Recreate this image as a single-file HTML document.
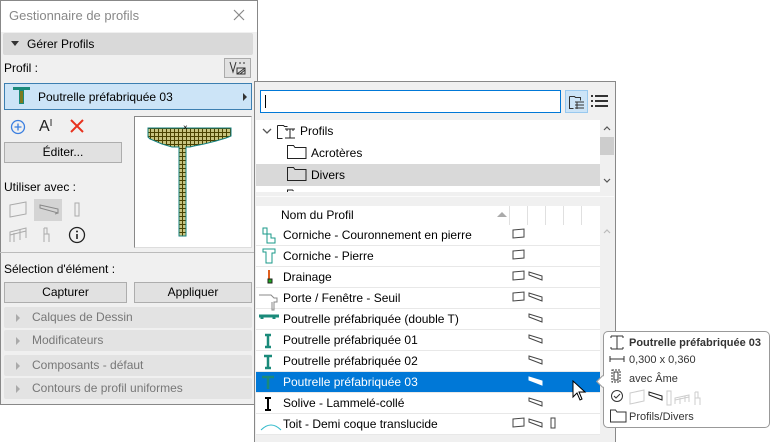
<!DOCTYPE html>
<html><head><meta charset="utf-8"><style>
*{box-sizing:border-box;margin:0;padding:0}
body{width:772px;height:442px;background:#fff;font-family:"Liberation Sans","DejaVu Sans",sans-serif;font-size:12px;color:#000;position:relative;overflow:hidden}
.a{position:absolute}
.btn{position:absolute;background:#e1e1e1;border:1px solid #adadad;text-align:center;line-height:18px;font-size:12px}
.bar{position:absolute;left:4px;width:248px;height:21px;background:#e3e3e3;border-radius:2px;color:#777;line-height:21px;padding-left:28px}
.bar:before{content:"";position:absolute;left:12px;top:7px;border-left:4px solid #aaa;border-top:4px solid transparent;border-bottom:4px solid transparent}
.row{position:absolute;left:256px;width:344px;height:21px;border-bottom:1px solid #e8e8e8;line-height:20px;padding-left:27px;font-size:12px;background:#fff}
.row.sel{background:#0078d7;color:#fff}
</style></head><body>
<!-- left panel -->
<div class="a" style="left:0;top:0;width:258px;height:405px;border:1px solid #888;background:#f0f0f0"></div>
<div class="a" style="left:1px;top:1px;width:256px;height:31px;background:#fff"></div>
<div class="a" style="left:9px;top:8px;color:#888;font-size:13px">Gestionnaire de profils</div>
<svg class="a" style="left:233px;top:9px" width="12" height="12"><path d="M1 1L11 11M11 1L1 11" stroke="#888" stroke-width="1.2"/></svg>
<div class="a" style="left:3px;top:33px;width:250px;height:22px;background:#d9d9d9;border-radius:2px"></div>
<div class="a" style="left:11px;top:41px;border-top:5px solid #333;border-left:4px solid transparent;border-right:4px solid transparent"></div>
<div class="a" style="left:27px;top:37px">Gérer Profils</div>
<div class="a" style="left:4px;top:61px">Profil :</div>
<div class="a" style="left:224px;top:58px;width:27px;height:20px;background:#e1e1e1;border:1px solid #aaa"></div>
<svg class="a" style="left:228px;top:60px" width="20" height="16" fill="none" stroke="#333"><path d="M2 2l3 10 3-10"/><path d="M9 8h8v6H9z"/><path d="M9 14l8-6M12 14l5-4" /><path d="M11 3h2M15 3h2"/></svg>
<div class="a" style="left:4px;top:83px;width:248px;height:27px;background:#cce4f7;border:1px solid #3c7fb1"></div>
<svg class="a" style="left:12px;top:86px" width="20" height="20"><rect x="1" y="1" width="17" height="3" fill="#1a8a7a"/><rect x="7" y="4" width="5" height="14" fill="#1a8a7a"/><rect x="8" y="5" width="3" height="12" fill="#7c7a20"/></svg>
<div class="a" style="left:38px;top:90px;font-size:12px">Poutrelle préfabriquée 03</div>
<div class="a" style="left:243px;top:93px;border-left:4px solid #333;border-top:4px solid transparent;border-bottom:4px solid transparent"></div>
<svg class="a" style="left:10px;top:119px" width="16" height="16"><circle cx="8" cy="8" r="6.5" fill="none" stroke="#3b7fe0" stroke-width="1.3"/><path d="M8 4.5v7M4.5 8h7" stroke="#3b7fe0" stroke-width="1.3"/></svg>
<div class="a" style="left:39px;top:118px;font-size:16px;color:#222">A<span style="font-size:10px;vertical-align:top">I</span></div>
<svg class="a" style="left:70px;top:119px" width="14" height="14"><path d="M1 1L13 13M13 1L1 13" stroke="#e8321e" stroke-width="2"/></svg>
<div class="btn" style="left:4px;top:142px;width:118px;height:21px;line-height:19px">Éditer...</div>
<div class="a" style="left:134px;top:116px;width:118px;height:132px;background:#fff;border:1px solid #888;border-right-color:#ddd;border-bottom-color:#ddd"></div>
<svg class="a" style="left:134px;top:116px" width="118" height="132">
<defs><pattern id="g" width="4" height="4" patternUnits="userSpaceOnUse"><rect width="4" height="4" fill="#c8c480"/><path d="M0 0.5H4M0.5 0V4" stroke="#4a4200" stroke-width="1"/></pattern></defs>
<path d="M14 12H97V20L92 22 82 25 70 28 60 30 56 31H52V120H45V31H38L28 28 16 23 14 21Z" fill="url(#g)" stroke="#138080" stroke-width="1"/>
<text x="49" y="14" font-size="8">×</text></svg>
<div class="a" style="left:4px;top:180px">Utiliser avec :</div>
<div class="a" style="left:34px;top:199px;width:28px;height:22px;background:#d4d4d4"></div>
<svg class="a" style="left:8px;top:200px" width="80" height="46" fill="none" stroke="#aaa" stroke-width="1">
<path d="M2 5L18 2V14L2 17Z"/><path d="M32 5L50 9V13L32 8ZM32 5V8M50 13L47 14" stroke="#888"/><path d="M67 3h4v13h-4z" />
<path d="M2 42V32L18 28V38M2 35L18 31M6 42V33M12 40V30"/><path d="M36 28v14M36 34h5v8M36 28h3v6"/></svg>
<svg class="a" style="left:68px;top:226px" width="20" height="20"><circle cx="9" cy="9" r="7.5" fill="none" stroke="#222" stroke-width="1.3"/><path d="M9 8v5" stroke="#222" stroke-width="1.6"/><circle cx="9" cy="5.5" r="1" fill="#222"/></svg>
<div class="a" style="left:0;top:252px;width:258px;height:1px;background:#bbb"></div>
<div class="a" style="left:4px;top:262px">Sélection d'élément :</div>
<div class="btn" style="left:4px;top:282px;width:123px;height:21px;line-height:19px">Capturer</div>
<div class="btn" style="left:134px;top:282px;width:118px;height:21px;line-height:19px">Appliquer</div>
<div class="bar" style="top:307px">Calques de Dessin</div>
<div class="bar" style="top:330px">Modificateurs</div>
<div class="bar" style="top:355px">Composants - défaut</div>
<div class="bar" style="top:378px">Contours de profil uniformes</div>

<!-- popup -->
<div class="a" style="left:254px;top:81px;width:362px;height:361px;background:#f0f0f0;border:1px solid #888;border-bottom:none"></div>
<div class="a" style="left:260px;top:90px;width:301px;height:23px;background:#fff;border:1px solid #0078d7"></div>
<div class="a" style="left:265px;top:95px;width:1px;height:13px;background:#000"></div>
<div class="a" style="left:565px;top:90px;width:23px;height:23px;background:#cce4f7;border:1px solid #99c9ef"></div>
<svg class="a" style="left:567px;top:92px" width="20" height="20" fill="none" stroke="#333"><path d="M2.5 4.5h5l1 1h5v3M2.5 4.5v12h4"/><path d="M8 10h9M8 13h9M8 16h9M10 10v7"/></svg>
<svg class="a" style="left:591px;top:93px" width="18" height="16" fill="#333"><rect x="0" y="2" width="2" height="2"/><rect x="4" y="2" width="13" height="2"/><rect x="0" y="7" width="2" height="2"/><rect x="4" y="7" width="13" height="2"/><rect x="0" y="12" width="2" height="2"/><rect x="4" y="12" width="13" height="2"/></svg>
<div class="a" style="left:256px;top:120px;width:344px;height:72px;background:#fff;overflow:hidden">
 <svg class="a" style="left:5px;top:6px" width="12" height="10"><path d="M2 3l4 4 4-4" fill="none" stroke="#555" stroke-width="1.3"/></svg>
 <svg class="a" style="left:21px;top:3px" width="24" height="18" fill="none" stroke="#222"><path d="M0.5 2.5h6l1 1h3M0.5 2.5v13h5"/><path d="M8 6h10M8 15h10M13 6v9M10 6v2M16 6v2"/></svg>
 <div class="a" style="left:44px;top:4px">Profils</div>
 <svg class="a" style="left:31px;top:24px" width="20" height="16" fill="none" stroke="#222"><path d="M0.5 1.5h6l1.5 2h11v11h-18.5z"/></svg>
 <div class="a" style="left:55px;top:26px">Acrotères</div>
 <div class="a" style="left:0;top:44px;width:344px;height:22px;background:#d9d9d9"></div>
 <svg class="a" style="left:31px;top:46px" width="20" height="16" fill="none" stroke="#222"><path d="M0.5 1.5h6l1.5 2h11v11h-18.5z"/></svg>
 <div class="a" style="left:55px;top:48px">Divers</div>
 <svg class="a" style="left:31px;top:68px" width="20" height="6" fill="none" stroke="#222"><path d="M0.5 5v-3h5l1 1"/></svg>
</div>
<div class="a" style="left:600px;top:120px;width:14px;height:72px;background:#f0f0f0"></div>
<div class="a" style="left:600px;top:137px;width:14px;height:18px;background:#cdcdcd"></div>
<svg class="a" style="left:602px;top:124px" width="10" height="64" fill="none" stroke="#555" stroke-width="1.2"><path d="M2 6l3-3 3 3M2 55l3 3 3-3"/></svg>
<div class="a" style="left:256px;top:196px;width:358px;height:1px;background:#fafafa"></div>
<div class="a" style="left:256px;top:206px;width:344px;height:20px;background:#fff;border-bottom:1px solid #e8e8e8"></div>
<div class="a" style="left:281px;top:208px">Nom du Profil</div>
<div class="a" style="left:497px;top:212px;border-bottom:5px solid #aaa;border-left:5px solid transparent;border-right:5px solid transparent"></div>
<div class="a" style="left:509px;top:206px;width:1px;height:20px;background:#e0e0e0"></div>
<div class="a" style="left:527px;top:206px;width:1px;height:20px;background:#e0e0e0"></div>
<div class="a" style="left:545px;top:206px;width:1px;height:20px;background:#e0e0e0"></div>
<div class="a" style="left:563px;top:206px;width:1px;height:20px;background:#e0e0e0"></div>
<div class="a" style="left:581px;top:206px;width:1px;height:20px;background:#e0e0e0"></div>

<div class="row" style="top:225px">Corniche - Couronnement en pierre</div>
<div class="row" style="top:246px">Corniche - Pierre</div>
<div class="row" style="top:267px">Drainage</div>
<div class="row" style="top:288px">Porte / Fenêtre - Seuil</div>
<div class="row" style="top:309px">Poutrelle préfabriquée (double T)</div>
<div class="row" style="top:330px">Poutrelle préfabriquée 01</div>
<div class="row" style="top:351px">Poutrelle préfabriquée 02</div>
<div class="row sel" style="top:372px">Poutrelle préfabriquée 03</div>
<div class="row" style="top:393px">Solive - Lammelé-collé</div>
<div class="row" style="top:414px">Toit - Demi coque translucide</div>

<svg class="a" style="left:256px;top:225px" width="344" height="217" fill="none" stroke="#333" stroke-width="1">
<path d="M7 3h4v6h4v4h4v5h-8V9H7z" stroke="#1a9a8a"/>
<path d="M7 24h12v4h-3v10h-6V27H7z" stroke="#1a9a8a"/>
<path d="M13 45v11h3" stroke="#e06020" stroke-width="2"/><rect x="12" y="54" width="4" height="4" stroke="#222" fill="#2a2"/>
<path d="M3 70h12l3 3h3v4h-3v8h-2v-8" stroke="#888"/>
<path d="M3 91h20M6 91v3M18 91v3" stroke="#1a8a7a" stroke-width="3"/>
<path d="M9 110h6M12 110v12M9 122h6" stroke="#1a8a7a" stroke-width="2.5"/>
<path d="M8 131h8M12 131v12M9 143h6" stroke="#1a8a7a" stroke-width="2.5"/>
<path d="M6 152h12M12 152v12" stroke="#1a8a7a" stroke-width="2.5"/>
<path d="M9 173h6M12 173v12M9 185h6" stroke="#000" stroke-width="2"/>
<path d="M5 205q10-10 20 0" stroke="#3bc"/>
<g stroke="#444">
<path d="M257 5l11-1v8l-11 1z"/><path d="M257 26l11-1v8l-11 1z"/><path d="M257 47l11-1v8l-11 1z"/><path d="M257 68l11-1v8l-11 1z"/><path d="M257 194l11-1v8l-11 1z"/>
<path d="M273 47l13 4v4l-13-5z"/><path d="M273 68l13 4v4l-13-5z"/><path d="M273 89l13 4v4l-13-5z"/><path d="M273 110l13 4v4l-13-5z"/><path d="M273 131l13 4v4l-13-5z"/><path d="M273 173l13 4v4l-13-5z"/><path d="M273 194l13 4v4l-13-5z"/>
<path d="M295 193h4v10h-4z"/>
</g>
<path d="M273 152l13 4v4l-13-5z" stroke="#fff" fill="#fff"/>
</svg>
<div class="a" style="left:600px;top:225px;width:14px;height:217px;background:#f0f0f0"></div>
<svg class="a" style="left:602px;top:226px" width="10" height="10" fill="none" stroke="#bbb" stroke-width="1.2"><path d="M2 7l3-3 3 3"/></svg>
<svg class="a" style="left:572px;top:380px" width="16" height="22"><path d="M1 1v16l4-4 3 7 2-1-3-7h6z" fill="#fff" stroke="#000"/></svg>

<!-- tooltip -->
<div class="a" style="left:603px;top:331px;width:167px;height:97px;background:#fff;border:1px solid #999;border-radius:5px"></div>
<div class="a" style="left:598px;top:377px;width:9px;height:9px;background:#fff;border-left:1px solid #999;border-bottom:1px solid #999;transform:rotate(45deg)"></div>
<svg class="a" style="left:609px;top:334px" width="20" height="92" fill="none" stroke="#333">
<path d="M2 2h12M2 15h12M8 2v13M2 2v2M14 2v2M2 13v2M14 13v2"/>
<path d="M1 25h14M1 22v6M15 22v6"/>
<path d="M3 36h8v12H3z" stroke-dasharray="2 1"/><path d="M5 38h4v8H5z"/>
<circle cx="8" cy="62" r="5.5"/><path d="M5 62l2 2 4-4"/>
<path d="M1.5 76h5l1.5 2h9v10H1.5z"/>
</svg>
<div class="a" style="left:629px;top:337px;font-weight:bold;font-size:11px;color:#333">Poutrelle préfabriquée 03</div>
<div class="a" style="left:629px;top:354px;font-size:11px;color:#333">0,300 x 0,360</div>
<div class="a" style="left:629px;top:373px;font-size:11px;color:#333">avec Âme</div>
<svg class="a" style="left:628px;top:389px" width="80" height="18" fill="none" stroke="#ccc"><path d="M2 4l14-3v11l-14 3z"/><path d="M21 3l13 4v4l-13-5z" stroke="#222"/><path d="M39 2h4v14h-4z"/><path d="M47 15V9l14-3v7M47 11l14-3M52 15V9M57 13V7"/><path d="M67 3v13M67 9h5v7M67 3h3v6"/></svg>
<div class="a" style="left:629px;top:411px;font-size:11px;color:#333">Profils/Divers</div>
</body></html>
